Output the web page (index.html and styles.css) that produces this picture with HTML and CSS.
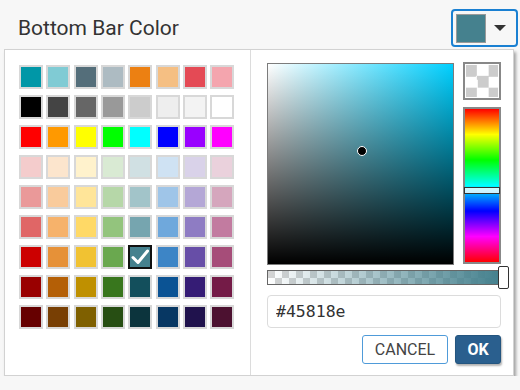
FILE: index.html
```html
<!DOCTYPE html>
<html lang="en">

<head>
    <meta charset="UTF-8">
    <meta name="viewport" content="width=device-width, initial-scale=1.0">
    <title>Bottom Bar Color</title>
    <link rel="stylesheet" href="styles.css">
</head>

<body>
    <div class="header">
        <span class="title">Bottom Bar Color</span>
        <div class="color-btn">
            <span class="current"></span>
            <span class="caret"></span>
        </div>
    </div>
    <div class="popup">
        <div class="palette"></div>
        <div class="picker">
            <div class="top">
                <div class="sv">
                    <span class="dot"></span>
                </div>
                <div class="side">
                    <div class="empty"><div class="checks"></div></div>
                    <div class="hue">
                        <span class="hue-mark"></span>
                    </div>
                </div>
            </div>
            <div class="alpha">
                <span class="alpha-handle"></span>
            </div>
            <input class="hex" type="text" value="#45818e">
            <div class="actions">
                <a href="javascript:void(0)" class="cancel">CANCEL</a>
                <a href="javascript:void(0)" class="ok">OK</a>
            </div>
        </div>
    </div>
    <script>
        // google sheets style palette
        var colors = [
            '#0097a7', '#80cbd4', '#546e7a', '#adbbc2', '#ec8012', '#f5bf83', '#e44a55', '#f4a5ae',
            '#000000', '#444444', '#666666', '#999999', '#cccccc', '#eeeeee', '#f3f3f3', '#ffffff',
            '#ff0000', '#ff9900', '#ffff00', '#00ff00', '#00ffff', '#0000ff', '#9900ff', '#ff00ff',
            '#f4cccc', '#fce5cd', '#fff2cc', '#d9ead3', '#d0e0e3', '#cfe2f3', '#d9d2e9', '#ead1dc',
            '#ea9999', '#f9cb9c', '#ffe599', '#b6d7a8', '#a2c4c9', '#9fc5e8', '#b4a7d6', '#d5a6bd',
            '#e06666', '#f6b26b', '#ffd966', '#93c47d', '#76a5af', '#6fa8dc', '#8e7cc3', '#c27ba0',
            '#cc0000', '#e69138', '#f1c232', '#6aa84f', '#45818e', '#3d85c6', '#674ea7', '#a64d79',
            '#990000', '#b45f06', '#bf9000', '#38761d', '#134f5c', '#0b5394', '#351c75', '#741b47',
            '#660000', '#783f04', '#7f6000', '#274e13', '#0c343d', '#073763', '#20124d', '#4c1130'
        ];
        var selected = '#45818e';
        var palette = document.querySelector('.palette');
        colors.forEach(function (c) {
            var s = document.createElement('div');
            s.className = 'swatch';
            s.style.backgroundColor = c;
            if (c === selected) {
                s.className += ' active';
                s.innerHTML = '<svg width="20" height="20" viewBox="0 0 20 20"><path d="M3 10.5 L8 15.5 L17.5 4" fill="none" stroke="#fff" stroke-width="3" stroke-linecap="round" stroke-linejoin="round"/></svg>';
            }
            palette.appendChild(s);
        });
    </script>
</body>

</html>
```

FILE: styles.css
```css
* {
    padding: 0;
    margin: 0;
    box-sizing: border-box;
}

body {
    background-color: #f7f7f7;
    font-family: Roboto, "Liberation Sans", sans-serif;
    color: #333;
}

.header {
    display: flex;
    justify-content: space-between;
    align-items: center;
    padding: 9px 2px 0 18px;
}

.title {
    font-size: 21px;
    line-height: 38px;
}

.color-btn {
    display: flex;
    align-items: center;
    width: 67px;
    height: 38px;
    padding-left: 3px;
    border: 2px solid #1a80d2;
    border-radius: 4px;
}

.current {
    width: 30px;
    height: 29px;
    background-color: #45818e;
    border: 1px solid #9a9a9a;
}

.caret {
    margin-left: 8px;
    width: 0;
    height: 0;
    border-left: 6px solid transparent;
    border-right: 6px solid transparent;
    border-top: 6px solid #333;
}

.popup {
    display: flex;
    width: 510px;
    height: 327px;
    margin: 2px 0 0 4px;
    background-color: white;
    border: 1px solid #d2d2d2;
    box-shadow: 2px 3px 3px rgba(0, 0, 0, 0.35);
}

.palette {
    width: 246px;
    padding: 15px 0 0 14px;
    border-right: 1px solid #dcdcdc;
    display: grid;
    grid-template-columns: repeat(8, 24px);
    grid-auto-rows: 24px;
    column-gap: 3.35px;
    row-gap: 6px;
    align-content: start;
}

.swatch {
    border: 2px solid #d8d8d8;
    display: flex;
    align-items: center;
    justify-content: center;
}

.swatch.active {
    border-color: #111;
}

.picker {
    flex: 1;
    padding: 12px 12px 0 16px;
}

.top {
    display: flex;
    gap: 9px;
}

.sv {
    position: relative;
    margin-top: 1px;
    width: 187px;
    height: 202px;
    border: 1px solid #7c7c7c;
    background: linear-gradient(to top, #000, rgba(0, 0, 0, 0)),
        linear-gradient(to right, #fff, #00d0ff);
}

.dot {
    position: absolute;
    left: 89px;
    top: 82px;
    width: 10px;
    height: 10px;
    border-radius: 50%;
    background-color: #000;
    border: 1.5px solid #fff;
}

.side {
    display: flex;
    flex-direction: column;
    gap: 7px;
}

.empty {
    width: 38px;
    height: 38px;
    border: 2px solid #888;
    padding: 1px;
    background-color: white;
}

.checks {
    width: 100%;
    height: 100%;
    background: repeating-conic-gradient(#fff 0 25%, #cccccc 0 50%) 0 0 / 22.67px 22.67px;
}

.hue {
    position: relative;
    width: 38px;
    height: 157px;
    border: 2px solid #888;
    background: linear-gradient(to bottom, #f00, #ff0, #0f0, #0ff, #00f, #f0f, #f00);
}

.hue-mark {
    position: absolute;
    left: -1px;
    right: -1px;
    top: 78px;
    height: 7px;
    border: 1.5px solid #333;
    background-color: rgba(255, 255, 255, 0.8);
}

.alpha {
    position: relative;
    width: 233px;
    height: 15px;
    margin-top: 5px;
    border: 1px solid #666;
    background: linear-gradient(to right, rgba(69, 129, 142, 0), #45818e),
        repeating-conic-gradient(#fff 0 25%, #d4d4d4 0 50%) 0 0 / 14px 14px;
}

.alpha-handle {
    position: absolute;
    right: -10px;
    top: -5px;
    width: 11px;
    height: 23px;
    background-color: white;
    border: 1.5px solid #333;
    border-radius: 2px;
}

.hex {
    display: block;
    width: 234px;
    height: 33px;
    margin-top: 10px;
    padding-left: 8px;
    border: 1px solid #dcdcdc;
    border-radius: 4px;
    font-family: "DejaVu Sans Mono", monospace;
    font-size: 16.5px;
    color: #333;
    outline: none;
}

.actions {
    display: flex;
    justify-content: flex-end;
    gap: 7px;
    width: 234px;
    margin-top: 7px;
}

.actions a {
    display: block;
    height: 29px;
    line-height: 27px;
    text-align: center;
    text-decoration: none;
    font-size: 16px;
    border-radius: 3px;
}

.cancel {
    width: 86px;
    color: #444;
    border: 1px solid #4f9bd9;
    background-color: white;
}

.ok {
    width: 46px;
    color: white;
    font-weight: bold;
    font-size: 17px;
    background-color: #2a5f8e;
    border: 1px solid #24557f;
    box-shadow: 1px 2px 2px rgba(0, 0, 0, 0.3);
}
```
